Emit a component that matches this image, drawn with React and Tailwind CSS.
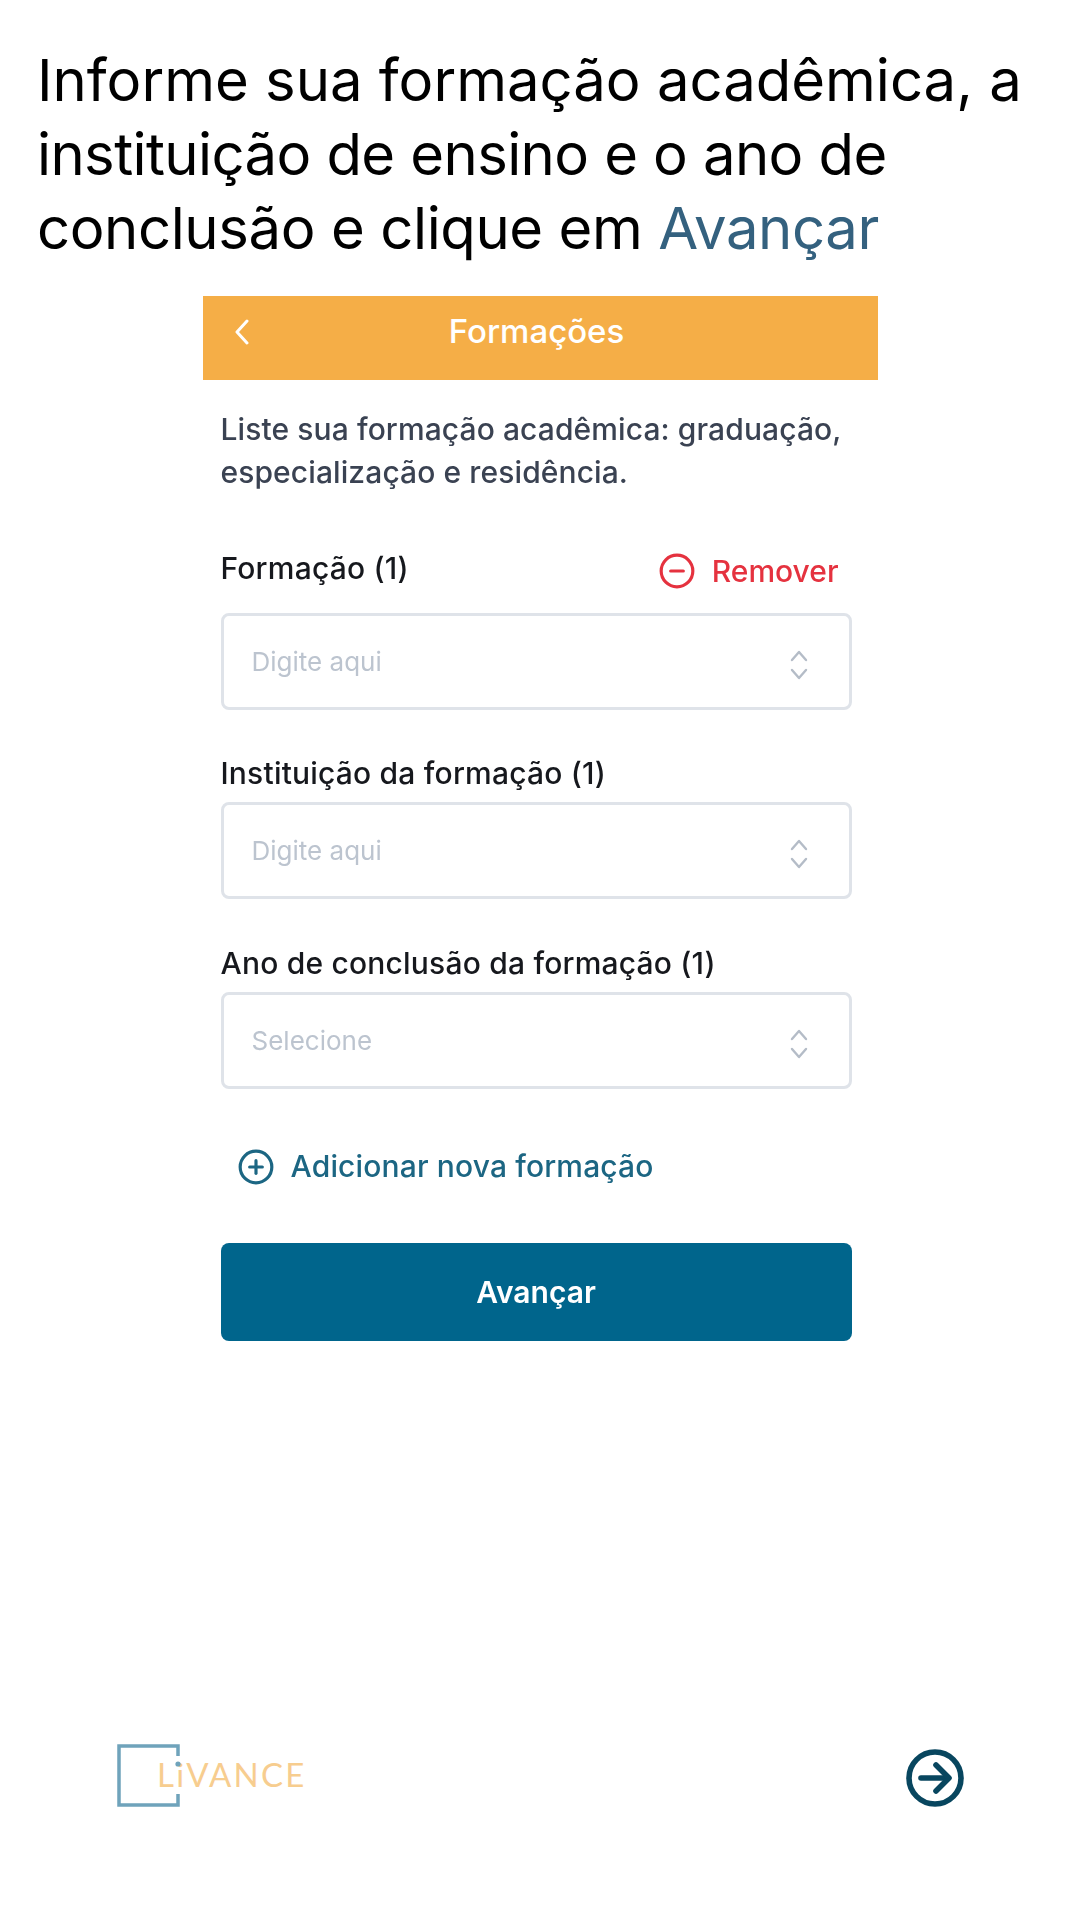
import { CircleMinus, CirclePlus } from "lucide-react";

function Field({ label, placeholder, remove, labelClass }) {
  return (
    <div>
      <div className={`flex justify-between ${labelClass}`}>
        <span className="text-[30px] leading-[38px] font-medium text-[#16181d] tracking-[0.2px]">{label}</span>
        {remove && (
          <span className="flex items-center gap-[16px] mr-[13px] mt-[3px] text-[#e5323f]">
            <CircleMinus size={38} strokeWidth={2} />
            <span className="text-[30px] font-medium leading-[36px]">Remover</span>
          </span>
        )}
      </div>
      <div className="h-[97px] border-[3px] border-[#dfe3e9] rounded-[8px] bg-white flex items-center justify-between pl-[28px] pr-[41px]">
        <span className="text-[26px] text-[#bcc4cf] -mt-[1px]">{placeholder}</span>
        <svg className="mt-[7px]" width="18" height="32" viewBox="0 0 18 32" fill="none" stroke="#b4bcc7" strokeWidth="2.4" strokeLinecap="round" strokeLinejoin="round">
          <path d="M2 11 L9 3 L16 11" />
          <path d="M2 21 L9 29 L16 21" />
        </svg>
      </div>
    </div>
  );
}

function Logo() {
  return (
    <svg width="190" height="64" viewBox="0 0 190 64" className="block -mt-[2px]">
      <path d="M61 12 V2 H2 V61 H61 V50" fill="none" stroke="#6fa3bb" strokeWidth="3.5" />
      <text x="40" y="43" fontFamily="Lato, sans-serif" fontSize="33" fontWeight="400" letterSpacing="2.2" fill="#f7cd8f">LiVANCE</text>
      <circle cx="61" cy="20" r="2.6" fill="#6fa3bb" />
    </svg>
  );
}

function ArrowCircle() {
  return (
    <svg width="64" height="64" viewBox="0 0 64 64" fill="none" stroke="#08465f" strokeWidth="5.6" strokeLinecap="round" strokeLinejoin="round">
      <circle cx="32" cy="32" r="26" />
      <path d="M18 32 H45" />
      <path d="M33 19 L46 32 L33 45" />
    </svg>
  );
}

export default function App() {
  return (
    <div className="min-h-[1920px] bg-white flex flex-col font-['Inter',sans-serif]">

      <h1 className="pt-[43px] pl-[37px] text-[58px] leading-[74px] font-normal text-black">
        Informe sua formação acadêmica, a<br />
        <span className="tracking-[-0.6px]">instituição de ensino e o ano de</span><br />
        <span className="tracking-[-0.4px]">conclusão e clique em <span className="text-[#34617f]">Avançar</span></span>
      </h1>

      <div className="w-[675px] mx-auto mt-[31px] blur-[0.5px]">

        <div className="h-[84px] bg-[#f5ae47] relative flex items-start justify-center pt-[15px] pr-[7px]">
          <svg className="absolute left-[31px] top-[23px]" width="16" height="26" viewBox="0 0 16 26" fill="none" stroke="#ffffff" strokeWidth="3" strokeLinecap="round" strokeLinejoin="round">
            <path d="M13 2 L3 13 L13 24" />
          </svg>
          <span className="text-[33px] leading-[40px] font-medium text-white">Formações</span>
        </div>

        <div className="pl-[18px] pr-[26px]">
          <p className="mt-[28px] text-[30px] leading-[43px] font-medium text-[#3a4252] tracking-[0.1px] whitespace-nowrap">
            Liste sua formação acadêmica: graduação,<br />
            especialização e residência.
          </p>

          <div className="mt-[55px] flex flex-col gap-[21px]">
            <Field label="Formação (1)" placeholder="Digite aqui" remove labelClass="h-[64px] items-start" />
            <Field label="Instituição da formação (1)" placeholder="Digite aqui" labelClass="h-[71px] items-end pb-[10px]" />
            <Field label="Ano de conclusão da formação (1)" placeholder="Selecione" labelClass="h-[72px] items-end pb-[10px]" />
          </div>

          <div className="mt-[59px] ml-[16px] flex items-center gap-[16px] text-[#1c6683]">
            <CirclePlus size={38} strokeWidth={2} />
            <span className="text-[30px] leading-[36px] font-medium tracking-[0.15px] -mt-[3px]">Adicionar nova formação</span>
          </div>

          <button className="mt-[57px] w-full h-[98px] rounded-[8px] bg-[#00658c] text-white text-[30px] font-semibold">
            Avançar
          </button>
        </div>
      </div>

      <div className="mt-auto mb-[110px] pl-[117px] pr-[113px] flex items-start justify-between">
        <Logo />
        <ArrowCircle />
      </div>

    </div>
  );
}
